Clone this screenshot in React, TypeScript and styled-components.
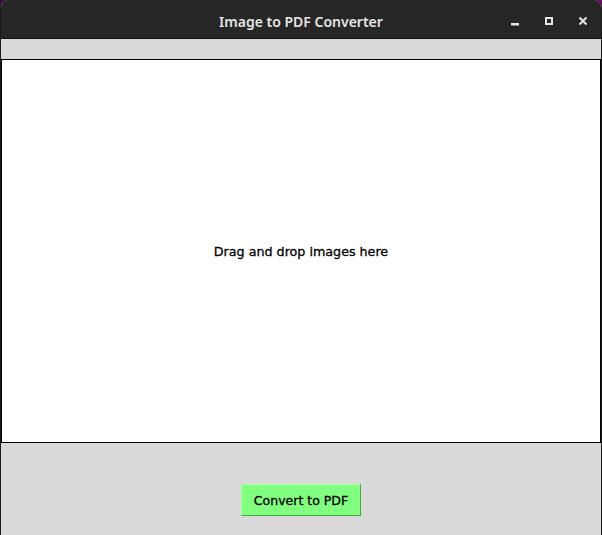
import React from "react";
import styled, { createGlobalStyle } from "styled-components";

const Global = createGlobalStyle`
  html, body { margin: 0; padding: 0; width: 602px; height: 535px; overflow: hidden; }
  body { background: linear-gradient(90deg, #3a0a4a, #5a0a6a 40%, #2a0a5a 70%, #6a0a6a); }
  #root { width: 602px; height: 535px; }
`;

const Window = styled.div`
  width: 602px;
  height: 535px;
  display: flex;
  flex-direction: column;
  background: #d9d9d9;
  border-radius: 8px 8px 0 0;
  overflow: hidden;
  box-sizing: border-box;
  border-left: 1px solid #1a1a1a;
  border-right: 1px solid #1a1a1a;
`;

const TitleBar = styled.div`
  height: 38px;
  flex: none;
  background: #262626;
  border-bottom: 1px solid #111;
  display: grid;
  grid-template-columns: 1fr auto 1fr;
  align-items: center;
`;

const Title = styled.div`
  grid-column: 2;
  font-family: "Noto Sans", "DejaVu Sans", sans-serif;
  font-weight: 600;
  font-size: 14px;
  color: #e6e6e6;
  padding-top: 4px;
`;

const Controls = styled.div`
  grid-column: 3;
  justify-self: end;
  display: flex;
  align-items: center;
  gap: 14px;
  padding-right: 8px;
  padding-top: 3px;
`;

const CtrlButton = styled.div`
  width: 20px;
  height: 20px;
  display: flex;
  align-items: center;
  justify-content: center;
`;

const Strip = styled.div`
  height: 20px;
  flex: none;
`;

const DropArea = styled.div`
  height: 384px;
  flex: none;
  box-sizing: border-box;
  background: #ffffff;
  border: 1px solid #000;
  display: flex;
  align-items: center;
  justify-content: center;
  font-family: "DejaVu Sans", sans-serif;
  font-size: 12.7px;
  color: #000;
`;

const DropText = styled.span`
  -webkit-text-stroke: 0.3px #000;
`;

const Footer = styled.div`
  flex: 1;
  display: flex;
  justify-content: center;
  align-items: flex-start;
  padding-top: 41px;
`;

const ConvertButton = styled.button`
  width: 120px;
  height: 32px;
  box-sizing: border-box;
  background: #80ff80;
  border: 1px solid;
  border-color: #a6ffa6 #3fa83f #3fa83f #a6ffa6;
  font-family: "DejaVu Sans", sans-serif;
  font-size: 12.5px;
  color: #000;
  padding: 0;
  -webkit-text-stroke: 0.3px #000;
`;

export default function App() {
  return (
    <>
      <Global />
      <Window>
        <TitleBar>
          <Title>Image to PDF Converter</Title>
          <Controls>
            <CtrlButton>
              <svg width="12" height="12" viewBox="0 0 12 12">
                <rect x="2" y="8" width="8" height="2.5" fill="#e6e6e6" />
              </svg>
            </CtrlButton>
            <CtrlButton>
              <svg width="12" height="12" viewBox="0 0 12 12">
                <rect x="3" y="3" width="6" height="6" fill="none" stroke="#e6e6e6" strokeWidth="2" />
              </svg>
            </CtrlButton>
            <CtrlButton>
              <svg width="12" height="12" viewBox="0 0 12 12">
                <path d="M2.5 2.5 L9.5 9.5 M9.5 2.5 L2.5 9.5" stroke="#e6e6e6" strokeWidth="2" />
              </svg>
            </CtrlButton>
          </Controls>
        </TitleBar>
        <Strip />
        <DropArea>
          <DropText>Drag and drop images here</DropText>
        </DropArea>
        <Footer>
          <ConvertButton>Convert to PDF</ConvertButton>
        </Footer>
      </Window>
    </>
  );
}
